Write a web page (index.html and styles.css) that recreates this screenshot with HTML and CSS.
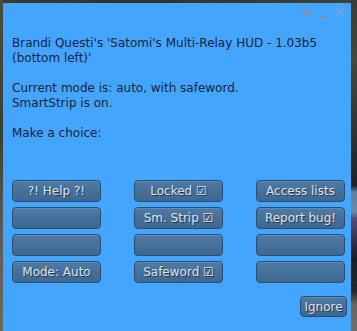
FILE: index.html
```html
<!DOCTYPE html>
<html>
<head>
<meta charset="utf-8">
<link rel="stylesheet" href="styles.css">
</head>
<body>
<div class="scene">
  <div class="edge-left"></div>
  <div class="dialog">
    <div class="titlebar">
      <svg class="ico" width="11" height="9" viewBox="0 0 11 9"><path d="M4 0h3v3h2.5l-4 4l-4-4H4z" fill="#7f93a8"/><rect x="0.5" y="7.5" width="10" height="1.5" fill="#7f93a8"/></svg>
      <svg class="ico ico-min" width="8" height="3" viewBox="0 0 8 3"><rect x="0" y="0" width="8" height="2" fill="#7f93a8"/></svg>
      <svg class="ico" width="9" height="9" viewBox="0 0 9 9"><path d="M1 1l7 7M8 1l-7 7" stroke="#8ea0b4" stroke-width="1.6"/></svg>
    </div>
    <div class="message">
      <p>Brandi Questi's 'Satomi's Multi-Relay HUD - 1.03b5 (bottom left)'</p>
      <p>Current mode is: auto, with safeword.<br>SmartStrip is on.</p>
      <p>Make a choice:</p>
    </div>
    <div class="buttons">
      <button class="btn">?! Help ?!</button>
      <button class="btn">Locked ☑</button>
      <button class="btn">Access lists</button>
      <button class="btn"></button>
      <button class="btn">Sm. Strip ☑</button>
      <button class="btn">Report bug!</button>
      <button class="btn"></button>
      <button class="btn"></button>
      <button class="btn"></button>
      <button class="btn">Mode: Auto</button>
      <button class="btn">Safeword ☑</button>
      <button class="btn"></button>
    </div>
    <div class="footer">
      <button class="btn btn-ignore">Ignore</button>
    </div>
  </div>
  <div class="edge-right"></div>
</div>
</body>
</html>
```
FILE: styles.css
```css
html, body {
  margin: 0;
  padding: 0;
  width: 357px;
  height: 331px;
  overflow: hidden;
  background: #35382b;
}
.scene {
  display: flex;
  width: 357px;
  height: 331px;
  background: linear-gradient(90deg, #3b3c2e, #2f3327 40%, #444236);
}
.edge-left {
  width: 3px;
  flex: none;
  background: linear-gradient(180deg, #4a4d37 0%, #3d3f33 40%, #5e5a52 70%, #6e6960 100%);
}
.edge-right {
  width: 6px;
  flex: none;
  background: linear-gradient(180deg, #3c3b2d 0%, #4a4736 18%, #2e2c28 45%, #232222 56%, #5f7f9a 58%, #6b8aa3 64%, #5a4a78 66%, #3a3348 72%, #1e1e22 78%, #292826 88%, #6a6258 92%, #766d62 100%);
}
.dialog {
  margin-top: 3px;
  width: 348px;
  height: 328px;
  flex: none;
  background: #44a5fe;
  box-sizing: border-box;
  padding: 0 4px 0 9px;
  font-family: "DejaVu Sans", sans-serif;
  font-size: 12px;
  color: #14243a;
  display: flex;
  flex-direction: column;
}
.titlebar {
  height: 33px;
  display: flex;
  justify-content: flex-end;
  align-items: flex-start;
  gap: 8px;
  padding-top: 4px;
  padding-right: 2px;
  box-sizing: border-box;
}
.ico { display: block; }
.ico-min { margin-top: 9px; }
.message {
  line-height: 15px;
  height: 144px;
}
.message p {
  margin: 0 0 15px 0;
}
.buttons {
  display: grid;
  grid-template-columns: repeat(3, 89px);
  grid-auto-rows: 22px;
  column-gap: 33px;
  row-gap: 5px;
}
.btn {
  font-family: "DejaVu Sans", sans-serif;
  font-size: 12px;
  color: #e0e4e8;
  text-shadow: 1px 1px 0 #22384f;
  background: linear-gradient(180deg, #4f7ca7 0%, #44709b 50%, #3e6891 100%);
  border: 1px solid #2b4d70;
  border-radius: 4px;
  padding: 0;
  margin: 0;
  box-sizing: border-box;
  box-shadow: inset 0 1px 0 rgba(255,255,255,0.12);
}
.footer {
  display: flex;
  justify-content: flex-end;
  margin-top: 13px;
}
.btn-ignore {
  width: 47px;
  height: 21px;
}
```
